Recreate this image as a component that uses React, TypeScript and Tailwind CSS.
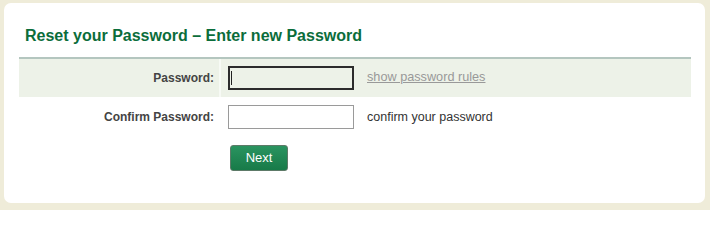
export default function App() {
  return (
    <div className="w-[710px] h-[210px] bg-[#efecd9] pt-[3px] pl-[4px] pr-[5px] pb-[7px] font-['Liberation_Sans',Arial,sans-serif]">
      <div className="h-full rounded-[7px] bg-white pl-[15px] pr-[14px] pt-[23px]">
        <h1 className="ml-[6px] text-[16px] leading-[20px] font-bold text-[#0b6d3b]">
          Reset your Password – Enter new Password
        </h1>
        <div className="mt-[11px] h-[2px] bg-[#b4c6bf]" />
        <div className="flex h-[38px] bg-[#edf2e8]">
          <div className="flex w-[200px] items-center justify-end pr-[5px] text-[12px] font-bold text-[#444]">
            Password:
          </div>
          <div className="w-[2px] bg-[#f7faf5]" />
          <div className="flex items-center pl-[7px]">
            <div className="relative">
              <input
                type="password"
                className="block h-[24px] w-[126px] border-2 border-[#2c2c2c] bg-[#edf2e8] px-[2px] text-[12px] outline-none"
              />
              {/* text caret of the focused field */}
              <span className="absolute left-[3px] top-[5px] h-[14px] w-[1px] bg-[#222]" />
            </div>
            <a href="#" className="ml-[13px] text-[12.7px] text-[#999] underline">
              show password rules
            </a>
          </div>
        </div>
        <div className="flex h-[40px]">
          <div className="flex w-[200px] items-center justify-end pr-[5px] text-[12px] font-bold text-[#444]">
            Confirm Password:
          </div>
          <div className="w-[2px]" />
          <div className="flex items-center pl-[7px]">
            <input
              type="password"
              className="h-[24px] w-[126px] border border-[#9a9a9a] bg-white px-[2px] text-[12px] outline-none"
            />
            <span className="ml-[13px] text-[12.5px] text-[#333]">confirm your password</span>
          </div>
        </div>
        <div className="mt-[8px] pl-[211px]">
          <button className="h-[26px] w-[58px] rounded-[3px] border border-[#5d7a68] bg-gradient-to-b from-[#2a9460] to-[#177a48] text-[13px] text-white">
            Next
          </button>
        </div>
      </div>
    </div>
  );
}
